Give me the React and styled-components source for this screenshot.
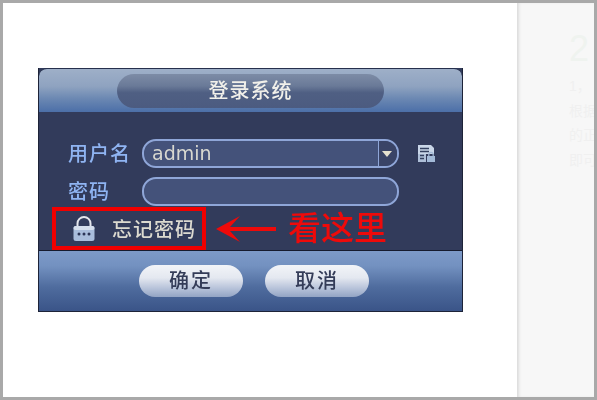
import styled, { createGlobalStyle } from "styled-components";

const GlobalStyle = createGlobalStyle`
  html, body {
    margin: 0;
    padding: 0;
  }
  body {
    font-family: "Liberation Sans", "Noto Sans CJK SC", sans-serif;
  }
`;

const sidebarLines = ["1，", "根据", "的正", "即可"];

export default function App() {
  return (
    <Frame>
      <GlobalStyle />
      <Main>
        <Dialog>
          <TitleBar>
            <TitlePill>登录系统</TitlePill>
          </TitleBar>
          <Body>
            <FieldRow>
              <FieldLabel>用户名</FieldLabel>
              <Field>
                <FieldValue>admin</FieldValue>
                <FieldArrow>
                  <svg width="10" height="6" viewBox="0 0 10 6">
                    <path d="M0 0h10L5 6z" fill="#e6e2d0" />
                  </svg>
                </FieldArrow>
              </Field>
              <KeyboardIcon />
            </FieldRow>
            <FieldRow $top={9}>
              <FieldLabel>密码</FieldLabel>
              <Field />
            </FieldRow>
            <HintRow>
              <ForgotBox>
                <LockIcon />
                <ForgotText>忘记密码</ForgotText>
              </ForgotBox>
              <HintArrow />
              <HintText>看这里</HintText>
            </HintRow>
          </Body>
          <Footer>
            <PillButton>确定</PillButton>
            <PillButton>取消</PillButton>
          </Footer>
        </Dialog>
      </Main>
      <Sidebar>
        <SidebarNumber>2</SidebarNumber>
        {sidebarLines.map((line) => (
          <SidebarLine key={line}>{line}</SidebarLine>
        ))}
      </Sidebar>
    </Frame>
  );
}

function KeyboardIcon() {
  return (
    <IconSlot>
      <svg width="19" height="19" viewBox="0 0 19 19">
        <path d="M1 1h13l3 3v6H1z" fill="#c9d6e8" />
        <path d="M1 10h8v8H1z" fill="#aebfd8" />
        <path d="M3 4.5h9M3 7.5h9M3 11.5h4M3 14.5h4" stroke="#33405f" strokeWidth="1.4" />
        <path d="M10 12h8v6h-8z" fill="#a3bad8" />
        <path d="M11.8 12V10.6a2.2 2.2 0 0 1 4.4 0V12" fill="none" stroke="#a3bad8" strokeWidth="1.2" />
      </svg>
    </IconSlot>
  );
}

function LockIcon() {
  return (
    <svg width="22" height="25" viewBox="0 0 22 25">
      <path d="M4.5 11V7.5a6.5 6.5 0 0 1 13 0V11" fill="none" stroke="#e4e6ec" strokeWidth="2" />
      <rect x="0.5" y="10" width="21" height="15" rx="2.5" fill="#a9bddc" />
      <rect x="0.5" y="10" width="21" height="4" rx="2" fill="#d5deec" />
      <circle cx="6" cy="18" r="1.5" fill="#2c3557" />
      <circle cx="11" cy="18" r="1.5" fill="#2c3557" />
      <circle cx="16" cy="18" r="1.5" fill="#2c3557" />
    </svg>
  );
}

function HintArrow() {
  return (
    <ArrowSlot>
      <svg width="60" height="26" viewBox="0 0 60 26">
        <path d="M0 13 L24 0 L14 11 H60 V15 H14 L24 26 z" fill="#ee0a0a" />
      </svg>
    </ArrowSlot>
  );
}

const Frame = styled.div`
  width: 597px;
  height: 400px;
  box-sizing: border-box;
  border: 3px solid #a9a9a9;
  display: flex;
  overflow: hidden;
  background: #ffffff;
`;

const Main = styled.div`
  width: 514px;
  padding: 65px 0 0 35px;
  box-sizing: border-box;
`;

const Dialog = styled.div`
  width: 425px;
  height: 244px;
  display: flex;
  flex-direction: column;
  background: #323b5b;
  box-sizing: border-box;
  border-right: 1px solid #1d2338;
  border-left: 1px solid #1d2338;
  border-bottom: 1px solid #1d2338;
  filter: blur(0.35px);
`;

const TitleBar = styled.div`
  height: 44px;
  padding-top: 5px;
  box-sizing: border-box;
  display: flex;
  justify-content: center;
  border-radius: 8px 8px 0 0;
  border-top: 1px solid #26304d;
  background: linear-gradient(#9eafc8 0%, #8fa3c0 40%, #6a87b2 70%, #4c6fa8 100%);
`;

const TitlePill = styled.div`
  width: 267px;
  height: 34px;
  border-radius: 17px;
  background: linear-gradient(#7d8ca6 0%, #6a7a98 35%, #4f5f83 55%, #4c5b80 100%);
  color: #f1f0ea;
  font-size: 20px;
  font-weight: 500;
  line-height: 34px;
  letter-spacing: 1px;
  text-align: center;
`;

const Body = styled.div`
  flex: 1;
  padding-top: 27px;
  display: flex;
  flex-direction: column;
  box-sizing: border-box;
  border-bottom: 1px solid #161b2e;
`;

const FieldRow = styled.div`
  display: flex;
  align-items: center;
  margin-top: ${({ $top }) => $top || 0}px;
  padding-left: 29px;
`;

const FieldLabel = styled.div`
  width: 74px;
  color: #8fb4f2;
  font-size: 20px;
  font-weight: 500;
  line-height: 28px;
  letter-spacing: 1px;
`;

const Field = styled.div`
  width: 257px;
  height: 29px;
  box-sizing: border-box;
  display: flex;
  border: 2px solid #8fa6d8;
  border-radius: 14px;
  background: #44527a;
  overflow: hidden;
`;

const FieldValue = styled.div`
  flex: 1;
  padding-left: 8px;
  color: #d8d8d0;
  font-size: 19px;
  line-height: 25px;
  font-family: "DejaVu Sans", sans-serif;
`;

const FieldArrow = styled.div`
  width: 19px;
  box-sizing: border-box;
  display: flex;
  align-items: center;
  justify-content: center;
  padding-right: 2px;
  border-left: 1px solid #8fa6d8;
  background: #3a4467;
`;

const IconSlot = styled.div`
  display: flex;
  margin-left: 18px;
`;

const HintRow = styled.div`
  display: flex;
  align-items: center;
  padding-left: 13px;
  margin-top: 1px;
`;

const ForgotBox = styled.div`
  width: 154px;
  height: 43px;
  box-sizing: border-box;
  border: 4px solid #f00000;
  display: flex;
  align-items: center;
  padding-left: 17px;
`;

const ForgotText = styled.div`
  margin-left: 17px;
  color: #dcdad0;
  font-size: 20px;
  font-weight: 500;
  letter-spacing: 1px;
  white-space: nowrap;
`;

const ArrowSlot = styled.div`
  display: flex;
  margin-left: 10px;
`;

const HintText = styled.div`
  margin-left: 12px;
  color: #ee0a0a;
  font-size: 33px;
  font-weight: 500;
  line-height: 43px;
  white-space: nowrap;
`;

const Footer = styled.div`
  height: 60px;
  box-sizing: border-box;
  display: flex;
  align-items: center;
  justify-content: center;
  gap: 22px;
  padding-left: 7px;
  background: linear-gradient(#7d9ac8 0%, #7391c0 25%, #4f6c9e 60%, #3a5488 100%);
`;

const PillButton = styled.div`
  width: 104px;
  height: 32px;
  border-radius: 16px;
  background: linear-gradient(#f2f4f8 0%, #e4e8f0 40%, #b4c0d8 75%, #93a4c4 100%);
  color: #343c58;
  font-size: 20px;
  font-weight: 500;
  line-height: 32px;
  letter-spacing: 2px;
  text-align: center;
`;

const Sidebar = styled.div`
  flex: 1;
  padding: 24px 0 0 52px;
  background: #f7f7f7;
  box-shadow: inset 3px 0 3px -1px #dcdcdc;
  overflow: hidden;
  white-space: nowrap;
`;

const SidebarNumber = styled.div`
  color: #eff3ef;
  font-size: 36px;
  line-height: 44px;
  margin-bottom: 3px;
`;

const SidebarLine = styled.div`
  color: #f0f0f0;
  font-size: 14px;
  line-height: 24.5px;
`;
